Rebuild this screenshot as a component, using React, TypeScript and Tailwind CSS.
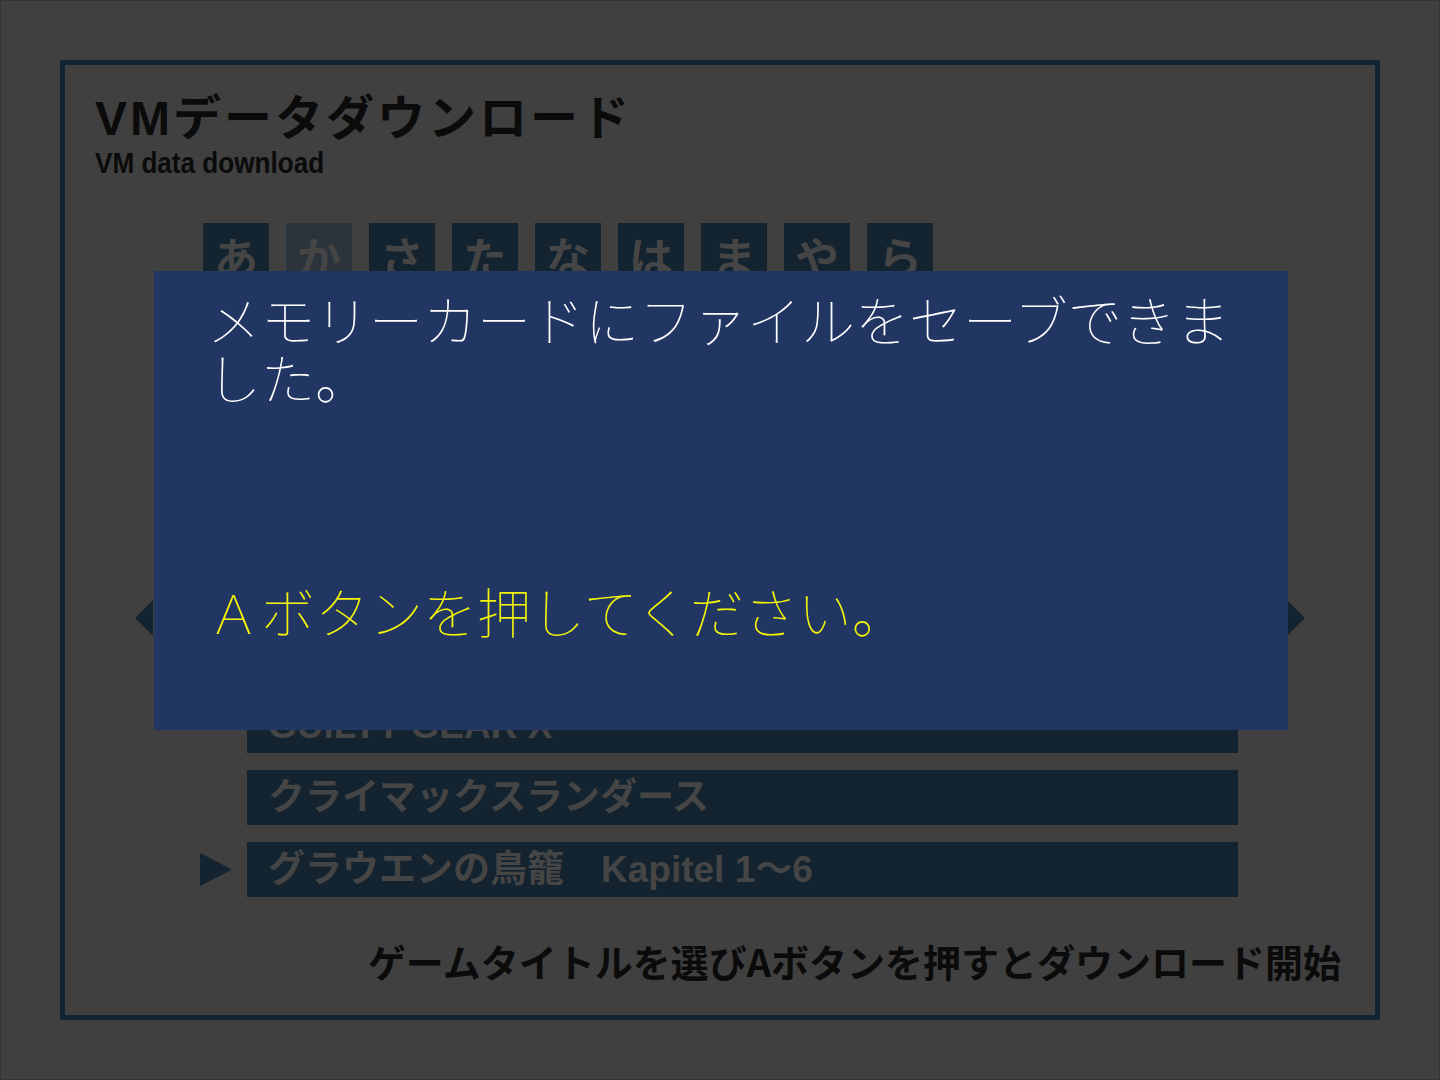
const kana = ["あ", "か", "さ", "た", "な", "は", "ま", "や", "ら"];

const games = [
  "カプコン VS. SNK",
  "ガンダム サイドストーリー0079",
  "機動戦士ガンダム 連邦VS.ジオン",
  "キャプテン翼",
  "ギガウイング",
  "GUILTY GEAR X",
  "クライマックスランダース",
  "グラウエンの鳥籠　Kapitel 1〜6",
];

const SELECTED_KANA = 1;
const CURSOR_ROW = 7;

function Arrow({ dir }: { dir: "left" | "right" }) {
  return (
    <svg width="18" height="36" viewBox="0 0 18 36" className="block">
      {dir === "left" ? (
        <polygon points="18,0 0,18 18,36" fill="#13232f" />
      ) : (
        <polygon points="0,0 18,18 0,36" fill="#13232f" />
      )}
    </svg>
  );
}

export default function App() {
  return (
    <div
      className="w-[1440px] h-[1080px] bg-[#404040] border border-[#353535] relative overflow-hidden"
      style={{ fontFamily: '"Liberation Sans", "Noto Sans CJK JP", sans-serif' }}
    >
      {/* outer frame */}
      <div className="absolute left-[59px] top-[59px] w-[1320px] h-[960px] border-[5px] border-[#13232f] flex flex-col">
        <div className="pl-[30px] pt-[26px]">
          <h1 className="text-[48px] leading-[56px] font-bold tracking-[3px] text-[#0b0b0b]">
            VMデータダウンロード
          </h1>
          <div className="text-[30px] leading-[30px] font-bold text-[#0b0b0b] origin-left scale-x-[0.87] mt-[1px]">
            VM data download
          </div>
        </div>

        {/* kana tabs */}
        <div className="flex gap-[17px] pl-[138px] mt-[45px]">
          {kana.map((k, i) => (
            <div
              key={k}
              className={
                "w-[66px] h-[66px] flex items-center justify-center text-[44px] font-bold text-[#454545] " +
                (i === SELECTED_KANA ? "bg-[#2b333b]" : "bg-[#13232f]")
              }
              style={{ fontFamily: '"Noto Sans CJK JP", sans-serif' }}
            >
              {k}
            </div>
          ))}
        </div>

        {/* title list */}
        <div className="relative mt-[49px] pl-[182px] pr-[137px]">
          <div className="absolute left-[70px] top-[262px]">
            <Arrow dir="left" />
          </div>
          <div className="absolute left-[1222px] top-[262px]">
            <Arrow dir="right" />
          </div>
          <div className="flex flex-col gap-[17px]">
            {games.map((g, i) => (
              <div key={g} className="relative h-[55px] bg-[#13232f] flex items-center pl-[21px]">
                {i === CURSOR_ROW && (
                  <svg width="32" height="33" viewBox="0 0 32 33" className="absolute left-[-47px] top-[11px]">
                    <polygon points="0,0 32,16.5 0,33" fill="#13232f" />
                  </svg>
                )}
                <span className="text-[37px] leading-none font-bold text-[#454545] whitespace-pre">
                  {g}
                </span>
              </div>
            ))}
          </div>
        </div>

        <div className="mt-auto mb-[30px] pr-[34px] flex justify-end">
          <span
            className="text-[38px] leading-[48px] font-bold text-[#0b0b0b]"
            style={{ fontFamily: '"Noto Sans CJK JP", sans-serif' }}
          >
            ゲームタイトルを選びAボタンを押すとダウンロード開始
          </span>
        </div>
      </div>

      {/* save result dialog */}
      <div
        className="absolute left-[153px] top-[270px] w-[1134px] h-[459px] bg-[#213663] pl-[53px] pt-[19px]"
        style={{ fontFamily: '"Noto Sans CJK JP", sans-serif' }}
      >
        <p className="text-[54px] leading-[58px] font-thin text-white">
          メモリーカードにファイルをセーブできま
          <br />
          した。
        </p>
        <p className="mt-[176px] text-[54px] leading-[58px] font-thin text-[#f4f40a]">
          Ａボタンを押してください。
        </p>
      </div>
    </div>
  );
}
